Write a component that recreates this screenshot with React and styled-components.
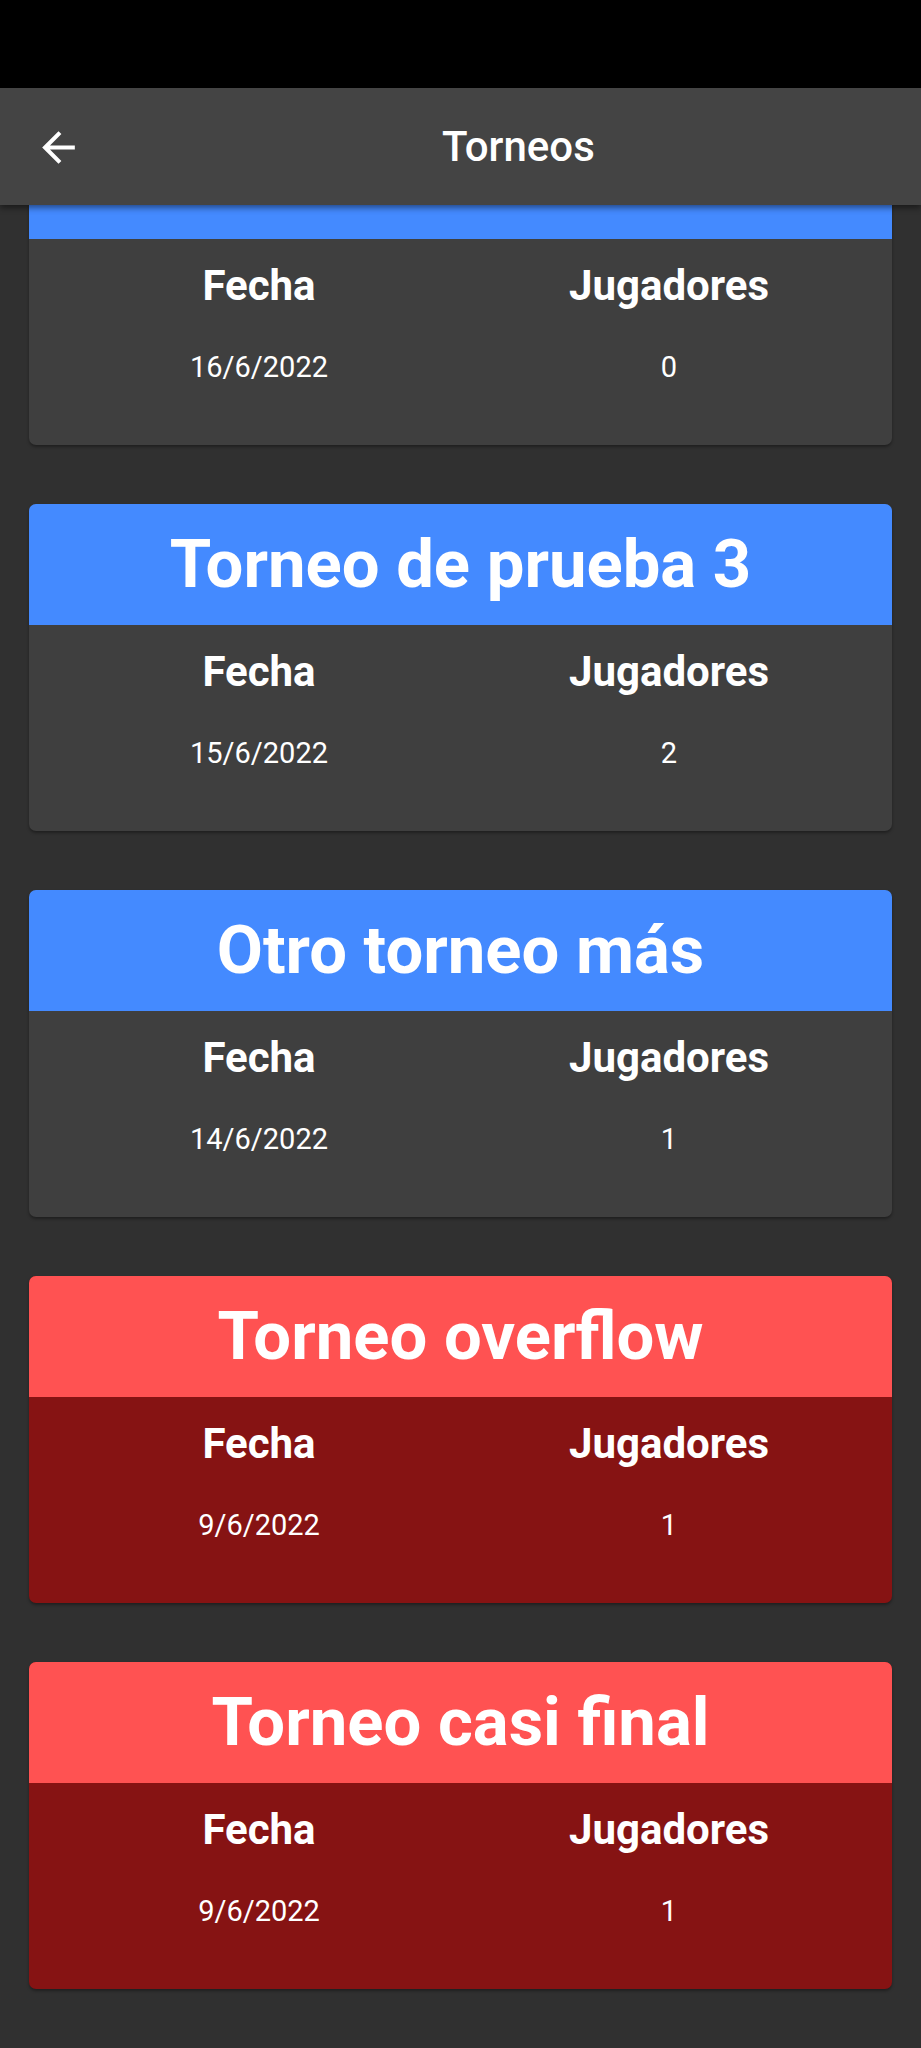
import React from 'react';
import styled, { createGlobalStyle } from 'styled-components';

const GlobalStyle = createGlobalStyle`
  html, body {
    margin: 0;
    padding: 0;
    background: #303030;
    font-family: Roboto, "Noto Sans", "Liberation Sans", sans-serif;
  }
`;

const StatusBar = styled.div`
  height: 88px;
  background: #000;
`;

const Screen = styled.div`
  position: relative;
  height: 1960px;
  overflow: hidden;
  background: #303030;
`;

const AppBar = styled.header`
  position: absolute;
  top: 0;
  left: 0;
  right: 0;
  z-index: 2;
  height: 117px;
  background: #444444;
  box-shadow: 0 3px 6px rgba(0, 0, 0, 0.45);
  display: flex;
  align-items: center;
  padding-left: 442px;
`;

const BackButton = styled.button`
  position: absolute;
  left: 34px;
  top: 35px;
  width: 49px;
  height: 49px;
  padding: 0;
  border: none;
  background: transparent;
  color: #fff;
  display: flex;
`;

const AppTitle = styled.h1`
  margin: 0;
  color: #fff;
  font-size: 42px;
  font-weight: 500;
  line-height: 117px;
`;

const List = styled.main`
  display: flex;
  flex-direction: column;
  gap: 59px;
  padding: 30px 29px 0;
`;

const Card = styled.section`
  border-radius: 7px;
  overflow: hidden;
  background: ${p => (p.$finished ? '#861313' : '#3f3f3f')};
  box-shadow: 0 2px 3px rgba(0, 0, 0, 0.35);
`;

const CardHeader = styled.div`
  height: 121px;
  background: ${p => (p.$finished ? '#ff5252' : '#448aff')};
  display: flex;
  align-items: center;
  justify-content: center;
`;

const CardTitle = styled.h2`
  margin: 0;
  color: #fff;
  font-size: 67px;
  font-weight: 700;
  line-height: 121px;
  white-space: nowrap;
`;

const CardBody = styled.div`
  height: 206px;
  box-sizing: border-box;
  padding: 22px 18px 0 25px;
  display: grid;
  grid-template-columns: 1fr 1fr;
  grid-template-rows: 50px 36px;
  row-gap: 38px;
  justify-items: center;
`;

const Label = styled.span`
  color: #fff;
  font-size: 42px;
  font-weight: 700;
  line-height: 50px;
`;

const Value = styled.span`
  color: #fff;
  font-size: 29px;
  font-weight: 400;
  line-height: 36px;
`;

const torneos = [
  { nombre: 'Torneo nuevo', fecha: '16/6/2022', jugadores: 0, terminado: false },
  { nombre: 'Torneo de prueba 3', fecha: '15/6/2022', jugadores: 2, terminado: false },
  { nombre: 'Otro torneo más', fecha: '14/6/2022', jugadores: 1, terminado: false },
  { nombre: 'Torneo overflow', fecha: '9/6/2022', jugadores: 1, terminado: true },
  { nombre: 'Torneo casi final', fecha: '9/6/2022', jugadores: 1, terminado: true },
];

const ArrowBack = () => (
  <svg viewBox="0 0 24 24" width="49" height="49" fill="currentColor">
    <path d="M20 11H7.83l5.59-5.59L12 4l-8 8 8 8 1.41-1.41L7.83 13H20v-2z" />
  </svg>
);

const App = () => (
  <>
    <GlobalStyle />
    <StatusBar />
    <Screen>
      <AppBar>
        <BackButton aria-label="Volver">
          <ArrowBack />
        </BackButton>
        <AppTitle>Torneos</AppTitle>
      </AppBar>

      <List>
        {torneos.map((t, i) => (
          <Card key={i} $finished={t.terminado}>
            <CardHeader $finished={t.terminado}>
              <CardTitle>{t.nombre}</CardTitle>
            </CardHeader>
            <CardBody>
              <Label>Fecha</Label>
              <Label>Jugadores</Label>
              <Value>{t.fecha}</Value>
              <Value>{t.jugadores}</Value>
            </CardBody>
          </Card>
        ))}
      </List>
    </Screen>
  </>
);

export default App;
